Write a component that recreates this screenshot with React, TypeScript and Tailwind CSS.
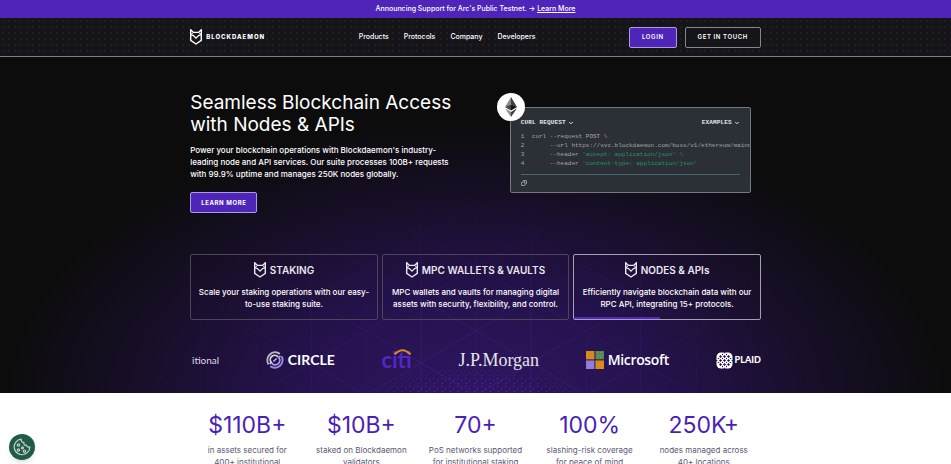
import React from 'react';
import { ChevronDown, Copy } from 'lucide-react';

interface Tab {
  title: string;
  text: string;
  active?: boolean;
}

const navLinks = ['Products', 'Protocols', 'Company', 'Developers'];

const tabs: Tab[] = [
  { title: 'STAKING', text: 'Scale your staking operations with our easy-to-use staking suite.' },
  { title: 'MPC WALLETS & VAULTS', text: 'MPC wallets and vaults for managing digital assets with security, flexibility, and control.' },
  { title: 'NODES & APIs', text: 'Efficiently navigate blockchain data with our RPC API, integrating 15+ protocols.', active: true },
];

const stats = [
  { value: '$110B+', label: 'in assets secured for 400+ institutional' },
  { value: '$10B+', label: 'staked on Blockdaemon validators' },
  { value: '70+', label: 'PoS networks supported for institutional staking' },
  { value: '100%', label: 'slashing-risk coverage for peace of mind' },
  { value: '250K+', label: 'nodes managed across 40+ locations' },
];

const DaemonMark = ({ className }: { className?: string }) => (
  <svg viewBox="0 0 12 16" fill="none" stroke="currentColor" strokeWidth="1.4" className={className} aria-hidden="true">
    <path d="M.7.8v10.600L6 15l5.300-3.600V.8L8.500 3.400h-5z" />
    <path d="M.9 5.600Q3.500 5.800 6 9.200q2.500-3.400 5.100-3.600" strokeWidth="1.1" />
    <path d="M3.300 3.600.9 5.600M8.700 3.600l2.400 2" strokeWidth="1" />
  </svg>
);

const EthereumMark = () => (
  <svg viewBox="0 0 12 20" className="h-5 w-3" role="img" aria-label="Ethereum">
    <path d="M6 0 0 10l6-2.7z" fill="#8a8a8f" />
    <path d="M6 0l6 10-6-2.7z" fill="#3c3c41" />
    <path d="M0 10l6 3.6V7.3z" fill="#444449" />
    <path d="M12 10l-6 3.6V7.3z" fill="#141417" />
    <path d="M0 11.3 6 20v-5.1z" fill="#8a8a8f" />
    <path d="M12 11.3 6 20v-5.1z" fill="#3c3c41" />
  </svg>
);

const HeroBackdrop = () => (
  <svg viewBox="0 0 951 336" preserveAspectRatio="xMidYMax slice" className="absolute inset-0 h-full w-full" aria-hidden="true">
    <defs>
      <radialGradient id="glow" gradientUnits="userSpaceOnUse" cx="0" cy="0" r="1" gradientTransform="translate(476 346) scale(470 280)">
        <stop offset="0" stopColor="#2f1762" />
        <stop offset=".4" stopColor="#24124c" />
        <stop offset=".75" stopColor="#170e25" />
        <stop offset="1" stopColor="#0c0c0d" />
      </radialGradient>
      <radialGradient id="fade" gradientUnits="userSpaceOnUse" cx="0" cy="0" r="1" gradientTransform="translate(476 336) scale(400 230)">
        <stop offset="0" stopColor="#fff" />
        <stop offset="1" stopColor="#000" />
      </radialGradient>
      <radialGradient id="dotFade" gradientUnits="userSpaceOnUse" cx="0" cy="0" r="1" gradientTransform="translate(476 342) scale(130 38)">
        <stop offset=".4" stopColor="#fff" />
        <stop offset="1" stopColor="#000" />
      </radialGradient>
      <pattern id="lattice" x="366" y="274" width="110" height="64" patternUnits="userSpaceOnUse">
        <path d="M0 0v64M55 0v64M0 0l110 64M110 0L0 64" stroke="#5a38c4" strokeWidth="1" fill="none" />
      </pattern>
      <pattern id="dots" width="8" height="8" patternUnits="userSpaceOnUse">
        <path d="M1 1h1v1H1zM5 3h1v1H5zM2 6h1v1H2z" fill="#5a28e0" />
      </pattern>
      <mask id="latticeMask"><rect width="951" height="336" fill="url(#fade)" /></mask>
      <mask id="dotMask"><rect width="951" height="336" fill="url(#dotFade)" /></mask>
    </defs>
    <rect width="951" height="336" fill="url(#glow)" />
    <rect width="951" height="336" fill="url(#lattice)" mask="url(#latticeMask)" opacity=".25" />
    <rect width="951" height="336" fill="url(#dots)" mask="url(#dotMask)" />
  </svg>
);

const CircleLogo = () => (
  <div className="flex items-center gap-1">
    <svg viewBox="0 0 18 18" fill="none" className="size-[18px]" aria-hidden="true">
      <path d="M13.8 2.9A7.8 7.8 0 0 0 2.6 13.4" stroke="#b9b7c4" strokeWidth="2" />
      <path d="M15.6 5.2A7.8 7.8 0 0 1 4.3 15.3" stroke="#9a8ae0" strokeWidth="2" />
      <path d="M12.2 6A4.4 4.4 0 0 0 5.2 11.4L3.8 13" stroke="#d6d4df" strokeWidth="1.8" />
      <path d="M5.8 12.1a4.4 4.4 0 0 0 7-5.4L14.4 5" stroke="#a99be8" strokeWidth="1.8" />
      <path d="m7.4 10.600 3.200-3.200" stroke="#c5bfe6" strokeWidth="1.4" />
    </svg>
    <span className="font-[Lato,sans-serif] text-[14px] font-bold leading-4 text-white">CIRCLE</span>
  </div>
);

const CitiLogo = () => (
  <div className="relative font-[Lato,sans-serif] text-[22px] font-bold leading-5 text-[#5227c4]">
    citi
    <svg viewBox="0 0 18 6" fill="none" className="absolute -top-px right-0 h-[6px] w-[19px]" aria-hidden="true">
      <path d="M1 5.4Q9-3 17 5.4" stroke="#d98a1c" strokeWidth="2" />
    </svg>
  </div>
);

const MicrosoftLogo = () => (
  <div className="flex items-center gap-1">
    <svg viewBox="0 0 18 18" className="size-[18px]" aria-hidden="true">
      <path d="M0 0h8.4v8.4H0z" fill="#d98a1c" />
      <path d="M9.4 0H18v8.4H9.4z" fill="#4f8a58" />
      <path d="M11 1h1v1h-1zM14 1h1v1h-1zM12 4h1v1h-1zM15 4h1v1h-1zM11 6h1v1h-1zM14 6h1v1h-1z" fill="#d98a1c" />
      <path d="M0 9.4h8.4V18H0z" fill="#917cdc" />
      <path d="M9.4 9.4H18V18H9.4z" fill="#d98a1c" />
    </svg>
    <span className="font-['Open_Sans',sans-serif] text-[14px] font-semibold leading-4 tracking-tight text-white">Microsoft</span>
  </div>
);

const PlaidLogo = () => (
  <div className="flex items-center gap-[2px]">
    <svg viewBox="0 0 17 17" fill="none" className="size-[17px]" aria-hidden="true">
      <rect x=".5" y=".5" width="16" height="16" rx="4.500" fill="#fff" />
      <path d="M8.500 0v1.200M8.500 15.800V17M0 8.500h1.200M15.800 8.500H17" stroke="#22124a" strokeWidth="1.200" />
      <path
        d="M4.500 3 6 4.500 4.500 6 3 4.500zM12.500 3 14 4.500 12.500 6 11 4.500zM8.500 3 10 4.500 8.500 6 7 4.500zM4.500 7 6 8.500 4.500 10 3 8.500zM8.500 7 10 8.500 8.500 10 7 8.500zM12.500 7 14 8.500 12.500 10 11 8.500zM4.500 11 6 12.500 4.500 14 3 12.500zM8.500 11 10 12.500 8.500 14 7 12.500zM12.500 11 14 12.500 12.500 14 11 12.500z"
        fill="#22124a"
      />
      <path d="M6.500 1.800v1.400M10.500 1.800v1.400M6.500 13.800v1.400M10.500 13.800v1.400M1.800 6.500h1.400M1.800 10.500h1.400M13.800 6.500h1.400M13.800 10.500h1.400M6.500 5.900v1.200M10.500 5.900v1.200M6.500 9.900v1.200M10.500 9.900v1.200" stroke="#22124a" strokeWidth="1" />
    </svg>
    <span className="font-[Lato,sans-serif] text-[9px] font-black leading-4 text-white">PLAID</span>
  </div>
);

const CodeCard = () => (
  <div className="relative mr-[10px] mt-[15px] h-[86px] w-[241px] rounded-xs border border-[#77777f] bg-[#2b3036] font-['Liberation_Mono',monospace] text-[6px] text-[#a3a3ac]">
    <div className="absolute -left-[14px] -top-[15px] flex size-7 items-center justify-center rounded-full bg-white">
      <EthereumMark />
    </div>
    <div className="flex h-full flex-col overflow-hidden px-[10px] pt-[10px]">
      <div className="flex justify-between font-bold leading-[9px] text-[#e4e4e8]">
        <button className="flex items-center gap-[2px] tracking-wide">CURL REQUEST <ChevronDown size={6} strokeWidth={4} /></button>
        <button className="flex items-center gap-[2px] tracking-wide">EXAMPLES <ChevronDown size={6} strokeWidth={4} /></button>
      </div>
      <ol className="-mr-[10px] mt-[5px] whitespace-pre leading-[9px]">
        <li className="flex"><span className="w-[11px] shrink-0">1</span>curl --request POST \</li>
        <li className="flex"><span className="w-[11px] shrink-0">2</span>{'     --url https://svc.blockdaemon.com/boss/v1/ethereum/mainnet/s'}</li>
        <li className="flex"><span className="w-[11px] shrink-0">3</span>{'     --header '}<span className="text-[#2b9163]">'accept: application/json' \</span></li>
        <li className="flex"><span className="w-[11px] shrink-0">4</span>{'     --header '}<span className="text-[#2b9163]">'content-type: application/json'</span></li>
      </ol>
      <hr className="mt-[6px] border-[#4d6668]" />
      <button aria-label="Copy" className="mt-[5px] self-start text-[#b4b4ba]"><Copy size={6} strokeWidth={3} className="-scale-x-100" /></button>
    </div>
  </div>
);

export default function App() {
  return (
    <div className="h-screen overflow-y-auto bg-white font-[Inter,sans-serif] text-[8px] leading-3 [scrollbar-width:none]">
      <div className="flex h-[18px] items-center justify-center gap-[2px] bg-[#4f25b9] text-[7px] font-medium text-white">
        <span>Announcing Support for Arc's Public Testnet. →</span>
        <a href="#" className="underline">Learn More</a>
      </div>

      <header className="border-b border-[#7c7b82] bg-[#151419] bg-[radial-gradient(#28272d_0.5px,transparent_1px)] bg-[size:6px_6px]">
        <div className="mx-auto flex h-[38px] w-3/5 items-center justify-between">
          <a href="#" className="flex items-center gap-1 text-white">
            <DaemonMark className="h-4 w-3" />
            <span className="text-[6px] font-extrabold tracking-[1px]">BLOCKDAEMON</span>
          </a>
          <nav className="flex gap-[15px] text-[7px] font-medium text-white">
            {navLinks.map(link => <a key={link} href="#">{link}</a>)}
          </nav>
          <div className="flex gap-2 text-[6px] font-semibold tracking-widest text-white">
            <button className="h-[21px] rounded-xs border border-[#a99be0] bg-[#4f25b9] px-3">LOGIN</button>
            <button className="h-[21px] rounded-xs border border-[#85858c] bg-[#151419] px-3">GET IN TOUCH</button>
          </div>
        </div>
      </header>

      <section className="relative bg-[#0c0c0d] text-white">
        <HeroBackdrop />
        <div className="relative mx-auto w-3/5 pb-[23px] pt-[35px]">
          <div className="flex items-start justify-between">
            <div className="w-[270px]">
              <h1 className="whitespace-nowrap text-[19px] leading-[22px]">Seamless Blockchain Access<br />with Nodes & APIs</h1>
              <p className="mt-2 whitespace-nowrap font-medium">
                Power your blockchain operations with Blockdaemon's industry-<br />
                leading node and API services. Our suite processes 100B+ requests<br />
                with 99.9% uptime and manages 250K nodes globally.
              </p>
              <button className="mt-3 h-[21px] rounded-xs border border-[#a99be0] bg-[#4f25b9] px-[10px] text-[6px] font-bold tracking-widest">LEARN MORE</button>
            </div>
            <CodeCard />
          </div>

          <div className="mt-[41px] grid grid-cols-3 gap-1">
            {tabs.map(tab => (
              <button key={tab.title} className={`relative flex h-[66px] flex-col items-center rounded-xs border px-1 pt-[7px] text-center ${tab.active ? 'border-[#a3a1ab]' : 'border-[#4b4658]'}`}>
                <span className="flex items-center gap-1 text-[10px] font-semibold leading-4 text-[#e9e8ee]">
                  <DaemonMark className="h-4 w-3" />
                  {tab.title}
                </span>
                <span className="mt-2 font-medium">{tab.text}</span>
                {tab.active && <span className="absolute bottom-0 left-0 h-[2px] w-[46%] bg-[#5227c4]" />}
              </button>
            ))}
          </div>

          <div className="mt-[30px] flex h-5 items-center justify-between">
            <div className="flex w-[29px] justify-end overflow-hidden font-[Lato,sans-serif] text-[10px] text-[#dddbe5]">itional</div>
            <CircleLogo />
            <CitiLogo />
            <span className="font-['Liberation_Serif',serif] text-[18px] leading-5 text-[#e6e4ea]">J.P.Morgan</span>
            <MicrosoftLogo />
            <PlaidLogo />
          </div>
        </div>
      </section>

      <section className="mx-auto grid w-3/5 grid-cols-5 pt-[18px]">
        {stats.map(stat => (
          <div key={stat.value} className="px-2 text-center">
            <p className="whitespace-nowrap text-[23px] leading-7 text-[#4a1fb8]">{stat.value}</p>
            <p className="mt-[5px] text-[#5d5770]">{stat.label}</p>
          </div>
        ))}
      </section>

      <button aria-label="Cookie settings" className="fixed bottom-1 left-[9px] flex size-[26px] items-center justify-center rounded-full bg-[#1f5c47] shadow-md">
        <svg viewBox="0 0 18 18" fill="none" stroke="#c5d2cc" strokeWidth="1.2" className="size-[18px]" aria-hidden="true">
          <path d="M8 1.2A7.8 7.8 0 1 0 16.8 9c-1.6.6-3-.2-3.2-1.7-2 .4-3.2-.9-2.7-2.7C9.2 4.4 8 3 8 1.2z" />
          <circle cx="5.5" cy="7" r="1.2" />
          <circle cx="5.5" cy="12" r="1.2" />
          <circle cx="9.5" cy="9.8" r="1" />
          <circle cx="11.5" cy="13.2" r="1.2" />
        </svg>
      </button>
    </div>
  );
}
